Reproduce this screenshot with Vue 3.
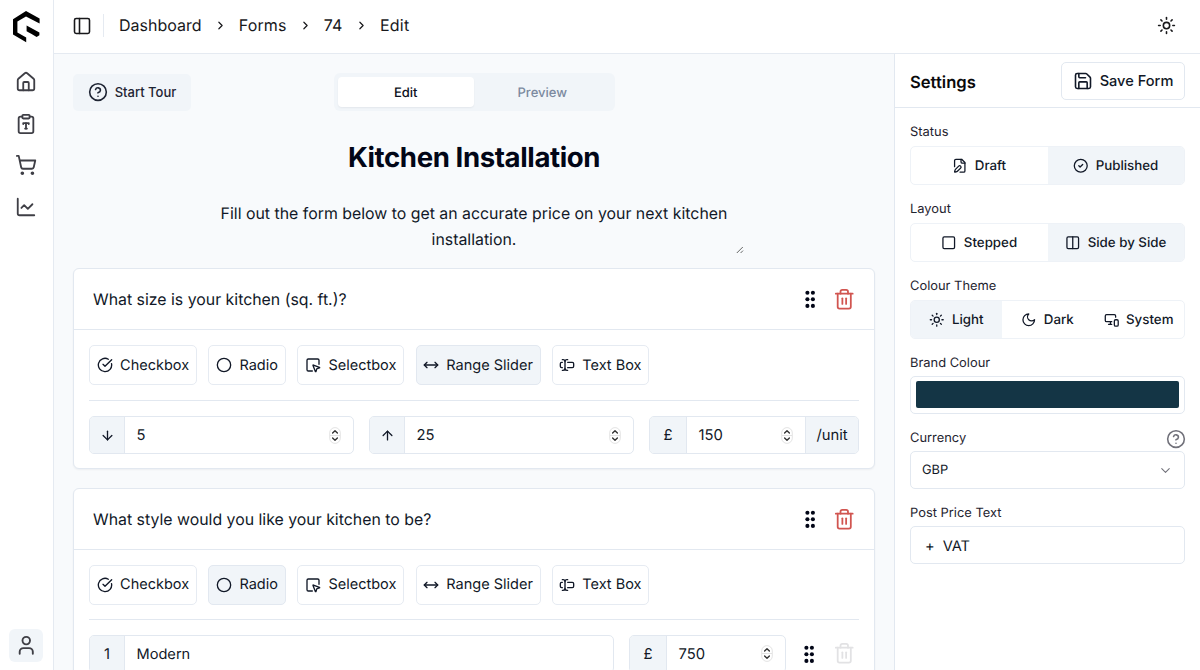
<script setup>
import { h } from 'vue'

const icons = {
  house: ['M15 21v-8a1 1 0 0 0-1-1h-4a1 1 0 0 0-1 1v8', 'M3 10a2 2 0 0 1 .709-1.528l7-5.999a2 2 0 0 1 2.582 0l7 5.999A2 2 0 0 1 21 10v9a2 2 0 0 1-2 2H5a2 2 0 0 1-2-2z'],
  clipboard: ['M9 2h6a1 1 0 0 1 1 1v2a1 1 0 0 1-1 1H9a1 1 0 0 1-1-1V3a1 1 0 0 1 1-1z', 'M16 4h2a2 2 0 0 1 2 2v14a2 2 0 0 1-2 2H6a2 2 0 0 1-2-2V6a2 2 0 0 1 2-2h2', 'M9 12v-1h6v1', 'M11 17h2', 'M12 11v6'],
  cart: ['M7 21a1 1 0 1 0 2 0a1 1 0 1 0-2 0', 'M18 21a1 1 0 1 0 2 0a1 1 0 1 0-2 0', 'M2.05 2.05h2l2.66 12.42a2 2 0 0 0 2 1.58h9.78a2 2 0 0 0 1.95-1.57l1.65-7.43H5.12'],
  chart: ['M3 3v16a2 2 0 0 0 2 2h16', 'm19 9-5 5-4-4-3 3'],
  user: ['M19 21v-2a4 4 0 0 0-4-4H9a4 4 0 0 0-4 4v2', 'M8 7a4 4 0 1 0 8 0a4 4 0 1 0-8 0'],
  panel: ['M5 3h14a2 2 0 0 1 2 2v14a2 2 0 0 1-2 2H5a2 2 0 0 1-2-2V5a2 2 0 0 1 2-2z', 'M9 3v18'],
  chevronRight: ['m9 18 6-6-6-6'],
  chevronDown: ['m6 9 6 6 6-6'],
  sun: ['M8 12a4 4 0 1 0 8 0a4 4 0 1 0-8 0', 'M12 2v2', 'M12 20v2', 'm4.93 4.93 1.41 1.41', 'm17.66 17.66 1.41 1.41', 'M2 12h2', 'M20 12h2', 'm6.34 17.66-1.41 1.41', 'm19.07 4.93-1.41 1.41'],
  help: ['M2 12a10 10 0 1 0 20 0a10 10 0 1 0-20 0', 'M9.09 9a3 3 0 0 1 5.83 1c0 2-3 3-3 3', 'M12 17h.01'],
  checkbox: ['M21.801 10A10 10 0 1 1 17 3.335', 'm9 11 3 3L22 4'],
  radio: ['M2 12a10 10 0 1 0 20 0a10 10 0 1 0-20 0'],
  select: ['M12.034 12.681a.498.498 0 0 1 .647-.647l9 3.5a.5.5 0 0 1-.033.943l-3.444 1.068a1 1 0 0 0-.66.66l-1.067 3.443a.5.5 0 0 1-.943.033z', 'M21 11V5a2 2 0 0 0-2-2H5a2 2 0 0 0-2 2v14a2 2 0 0 0 2 2h6'],
  range: ['m18 8 4 4-4 4', 'M2 12h20', 'm6 8-4 4 4 4'],
  textbox: ['M5 4h1a3 3 0 0 1 3 3 3 3 0 0 1 3-3h1', 'M13 20h-1a3 3 0 0 1-3-3 3 3 0 0 1-3 3H5', 'M5 16H4a2 2 0 0 1-2-2v-4a2 2 0 0 1 2-2h1', 'M13 8h7a2 2 0 0 1 2 2v4a2 2 0 0 1-2 2h-7', 'M9 7v10'],
  down: ['M12 5v14', 'm19 12-7 7-7-7'],
  up: ['m5 12 7-7 7 7', 'M12 19V5'],
  trash: ['M3 6h18', 'M19 6v14c0 1-1 2-2 2H7c-1 0-2-1-2-2V6', 'M8 6V4c0-1 1-2 2-2h4c1 0 2 1 2 2v2', 'M10 11v6', 'M14 11v6'],
  save: ['M15.2 3a2 2 0 0 1 1.4.6l3.8 3.8a2 2 0 0 1 .6 1.4V19a2 2 0 0 1-2 2H5a2 2 0 0 1-2-2V5a2 2 0 0 1 2-2z', 'M17 21v-7a1 1 0 0 0-1-1H8a1 1 0 0 0-1 1v7', 'M7 3v4a1 1 0 0 0 1 1h7'],
  draft: ['M12.5 22H18a2 2 0 0 0 2-2V7l-5-5H6a2 2 0 0 0-2 2v9.5', 'M14 2v4a2 2 0 0 0 2 2h4', 'M13.378 15.626a1 1 0 1 0-3.004-3.004l-5.01 5.012a2 2 0 0 0-.506.854l-.837 2.87a.5.5 0 0 0 .62.62l2.87-.837a2 2 0 0 0 .854-.506z'],
  published: ['M2 12a10 10 0 1 0 20 0a10 10 0 1 0-20 0', 'm9 12 2 2 4-4'],
  square: ['M5 3h14a2 2 0 0 1 2 2v14a2 2 0 0 1-2 2H5a2 2 0 0 1-2-2V5a2 2 0 0 1 2-2z'],
  columns: ['M5 3h14a2 2 0 0 1 2 2v14a2 2 0 0 1-2 2H5a2 2 0 0 1-2-2V5a2 2 0 0 1 2-2z', 'M12 3v18'],
  moon: ['M12 3a6 6 0 0 0 9 9 9 9 0 1 1-9-9Z'],
  system: ['M18 8V6a2 2 0 0 0-2-2H4a2 2 0 0 0-2 2v7a2 2 0 0 0 2 2h8', 'M10 19v-3.96 3.15', 'M7 19h5', 'M18 12h2a2 2 0 0 1 2 2v6a2 2 0 0 1-2 2h-2a2 2 0 0 1-2-2v-6a2 2 0 0 1 2-2z']
}

const Icon = (props) =>
  h('svg', {
    width: props.size, height: props.size, viewBox: '0 0 24 24', fill: 'none',
    stroke: 'currentColor', 'stroke-width': props.stroke ?? 2,
    'stroke-linecap': 'round', 'stroke-linejoin': 'round', style: { flex: 'none', display: 'block' }
  }, icons[props.name].map((d) => h('path', { d })))
Icon.props = ['name', 'size', 'stroke']

const Grip = () =>
  h('svg', { width: 12, height: 20, viewBox: '0 0 12 20', fill: '#020617', style: { flex: 'none', display: 'block' } },
    [3.7, 10.3, 16.9].flatMap((cy) => [3.4, 8.9].map((cx) => h('circle', { cx, cy, r: 2.05 }))))

const Spinner = () =>
  h('svg', { width: 12, height: 17, viewBox: '0 0 12 17', fill: 'none', style: { flex: 'none', display: 'block' } }, [
    h('rect', { x: 0.7, y: 0.6, width: 10.6, height: 15.8, rx: 5.3, stroke: '#dcdcdc', 'stroke-width': 0.8 }),
    h('path', { d: 'M1 8.5h10', stroke: '#dcdcdc', 'stroke-width': 0.8 }),
    h('path', { d: 'M3.6 6 6 3.7 8.4 6M3.6 11 6 13.3 8.4 11', stroke: '#333', 'stroke-width': 1.4, 'stroke-linecap': 'round', 'stroke-linejoin': 'round' })
  ])

const nav = ['house', 'clipboard', 'cart', 'chart']
const types = [
  { id: 'checkbox', label: 'Checkbox', w: 108 },
  { id: 'radio', label: 'Radio', w: 78 },
  { id: 'select', label: 'Selectbox', w: 107.4 },
  { id: 'range', label: 'Range Slider', w: 125 },
  { id: 'textbox', label: 'Text Box', w: 97.4 }
]
const questions = [
  { title: 'What size is your kitchen (sq. ft.)?', type: 'range' },
  { title: 'What style would you like your kitchen to be?', type: 'radio' }
]
</script>

<template>
  <div class="app">
    <aside class="sidebar">
      <svg class="logo" width="27" height="32" viewBox="0 0 27 32">
        <path d="M13 .1 26.6 7.4V12.4L13 5.4 4.4 10.6V21.6L13.2 26.4V31.2L0 23.6V8.2z" />
        <path d="M13.6 14.4 26.4 21.5V24.2L23.6 26.1 18.6 22.9 13.6 20.2z" />
      </svg>
      <nav>
        <span v-for="n in nav" :key="n" class="nav-item"><Icon :name="n" size="22" stroke="2" /></span>
      </nav>
      <span class="user"><Icon name="user" size="22.5" stroke="2" /></span>
    </aside>

    <div class="body">
      <header class="topbar">
        <Icon name="panel" size="20" stroke="1.9" />
        <i class="sep"></i>
        <div class="crumbs">
          <span class="c1">Dashboard</span><Icon name="chevronRight" size="13" stroke="2.2" />
          <span class="c2">Forms</span><Icon name="chevronRight" size="13" stroke="2.2" />
          <span class="c3">74</span><Icon name="chevronRight" size="13" stroke="2.2" />
          <span class="c4">Edit</span>
        </div>
        <Icon name="sun" size="19" stroke="2" />
      </header>

      <div class="content">
        <main class="canvas">
          <div class="toolbar">
            <button class="tour"><Icon name="help" size="20" stroke="1.9" /><span>Start Tour</span></button>
            <div class="tabs"><span class="tab on">Edit</span><span class="tab">Preview</span></div>
          </div>
          <h1>Kitchen Installation</h1>
          <div class="desc">
            <p>Fill out the form below to get an accurate price on your next kitchen<br>installation.</p>
            <svg class="resize" width="8" height="8" viewBox="0 0 8 8" fill="none" stroke="#555" stroke-width="0.9"><path d="M.8 7 6.8 1M4.6 7 7 4.6" /></svg>
          </div>

          <section v-for="q in questions" :key="q.title" class="card">
            <div class="card-head">
              <span class="q-title">{{ q.title }}</span>
              <Grip />
              <span class="trash"><Icon name="trash" size="22.5" stroke="1.9" /></span>
            </div>
            <div class="card-body">
              <div class="types">
                <span v-for="t in types" :key="t.id" class="type" :class="{ on: t.id === q.type }" :style="{ width: t.w + 'px' }">
                  <Icon :name="t.id" size="16" stroke="2" /><span>{{ t.label }}</span>
                </span>
              </div>
              <div v-if="q.type === 'range'" class="fields">
                <div class="field wide"><span class="pre"><Icon name="down" size="15" stroke="2.1" /></span><span class="val">5</span><Spinner /></div>
                <div class="field wide"><span class="pre"><Icon name="up" size="15" stroke="2.1" /></span><span class="val">25</span><Spinner /></div>
                <div class="field unit"><span class="pre pound">£</span><span class="val">150</span><Spinner /><span class="post">/unit</span></div>
              </div>
              <div v-else class="fields">
                <div class="field option"><span class="pre">1</span><span class="val">Modern</span></div>
                <div class="field price"><span class="pre pound">£</span><span class="val">750</span><Spinner /></div>
                <div class="row-tools"><Grip /><span class="trash off"><Icon name="trash" size="22.5" stroke="1.9" /></span></div>
              </div>
            </div>
          </section>
        </main>

        <aside class="settings">
          <div class="settings-head">
            <h2>Settings</h2>
            <button class="save"><Icon name="save" size="20" stroke="1.9" /><span>Save Form</span></button>
          </div>
          <div class="settings-body">
            <label>Status</label>
            <div class="seg">
              <span><Icon name="draft" size="15.5" /><b>Draft</b></span>
              <span class="on"><Icon name="published" size="15.5" /><b>Published</b></span>
            </div>
            <label>Layout</label>
            <div class="seg">
              <span><Icon name="square" size="15.5" /><b>Stepped</b></span>
              <span class="on"><Icon name="columns" size="15.5" /><b>Side by Side</b></span>
            </div>
            <label>Colour Theme</label>
            <div class="seg three">
              <span class="on"><Icon name="sun" size="15.5" /><b>Light</b></span>
              <span><Icon name="moon" size="15.5" /><b>Dark</b></span>
              <span><Icon name="system" size="15.5" /><b>System</b></span>
            </div>
            <label>Brand Colour</label>
            <div class="box colour"><i></i></div>
            <label class="with-help">Currency<Icon name="help" size="20" stroke="1.9" /></label>
            <div class="box currency"><span>GBP</span><Icon name="chevronDown" size="15" stroke="1.7" /></div>
            <label>Post Price Text</label>
            <div class="box vat"><span class="plus">+</span><span>VAT</span></div>
          </div>
        </aside>
      </div>
    </div>
  </div>
</template>

<style>
html, body { margin: 0; overflow: hidden; }
</style>

<style scoped>
* { box-sizing: border-box; }
.app {
  display: flex; width: 1200px; height: 670px; overflow: hidden; background: #fff;
  font-family: Inter, "Liberation Sans", sans-serif; font-size: 15px; color: #111827;
  text-rendering: geometricPrecision;
}
button { font: inherit; color: inherit; margin: 0; padding: 0; }
h1, h2, p { margin: 0; }
.sidebar { width: 54px; flex: none; border-right: 1px solid #e5eaf1; display: flex; flex-direction: column; align-items: center; padding: 11px 0 8px; }
.logo { display: block; }
nav { display: flex; flex-direction: column; margin-top: 18.8px; padding-right: 1px; }
.nav-item { height: 41.4px; display: flex; align-items: center; color: #3f3f46; }
.user { margin-top: auto; margin-right: 1px; width: 34px; height: 33px; border-radius: 6px; background: #f1f5f9; display: flex; align-items: center; justify-content: center; color: #3f3f46; }
.body { flex: 1; min-width: 0; display: flex; flex-direction: column; }
.topbar { height: 54px; flex: none; border-bottom: 1px solid #e5eaf1; display: flex; align-items: center; padding: 0 24.5px 2px 18px; color: #18181b; }
.sep { width: 1px; height: 23px; background: #e5eaf1; margin: 0 15px 0 11px; }
.crumbs { flex: 1; display: flex; align-items: center; font-size: 16px; padding-bottom: 1px; }
.crumbs svg { margin: 1px 12.1px 0; }
.c2 { letter-spacing: 0.15px; }
.c3 + svg { margin-left: 12.4px; margin-right: 12.4px; }
.c4 { letter-spacing: 0.2px; }
.content { flex: 1; min-height: 0; display: flex; }
.canvas { width: 840px; flex: none; background: #f8fafc; padding: 19px 19px 0; overflow: hidden; }
.toolbar { display: flex; height: 38px; align-items: center; }
.tour { width: 118px; height: 37px; border: 0; border-radius: 5px; background: #f1f5f9; display: flex; align-items: center; justify-content: center; gap: 7px; font-size: 13px; font-weight: 500; color: #1e2433; }
.tabs { margin-left: 142.5px; width: 281px; height: 38px; background: #f1f5f9; border-radius: 6px; padding: 4px; display: flex; font-size: 13px; font-weight: 500; color: #7c8aa0; }
.tab { flex: 1; display: flex; align-items: center; justify-content: center; border-radius: 4px; padding-top: 1px; }
.tab.on { background: #fff; color: #0b1020; box-shadow: 0 1px 2px rgba(15, 23, 42, .06); }
h1 { margin-top: 28px; height: 36px; line-height: 36px; text-align: center; font-size: 27.6px; font-weight: 700; letter-spacing: -0.4px; color: #020617; }
.desc { position: relative; width: 542px; margin: 26px auto 13px; height: 54px; text-align: center; font-size: 15.87px; line-height: 26.3px; white-space: nowrap; }
.resize { position: absolute; right: 1px; bottom: 1.5px; }
.card { height: 201px; border: 1px solid #e2e8f0; border-radius: 6px; background: #fff; margin-bottom: 19px; box-shadow: 0 1px 2px rgba(15, 23, 42, .05); }
.card-head { height: 61px; border-bottom: 1px solid #e2e8f0; display: flex; align-items: center; padding: 0 19px; font-size: 15.86px; }
.q-title { flex: 1; white-space: nowrap; }
.trash { margin-left: 17px; color: #d15550; }
.trash.off { color: #e2e2e4; margin-left: 18px; }
.card-body { padding: 15px 15px 0; }
.card:last-child .card-body { padding-top: 14.6px; }
.types { display: flex; gap: 11.05px; height: 56px; border-bottom: 1px solid #e2e8f0; }
.card:last-child .types { height: 55px; }
.type { height: 40px; flex: none; border: 1px solid #e6ebf2; border-radius: 5px; display: flex; align-items: center; justify-content: center; gap: 7.2px; font-size: 14.5px; white-space: nowrap; padding-top: 0.6px; }
.type.on { background: #f1f5f9; border-color: #e2e8f0; }
.fields { display: flex; gap: 15px; margin-top: 15px; }
.field { height: 38px; flex: none; border: 1px solid #e2e8f0; border-radius: 5px; display: flex; align-items: center; overflow: hidden; background: #fff; font-size: 14.8px; }
.wide { width: 265px; padding-right: 12px; }
.unit { width: 210px; }
.option { width: 525px; }
.price { width: 157px; padding-right: 12px; }
.pre { width: 35px; height: 100%; flex: none; background: #f1f5f9; border-right: 1px solid #e2e8f0; display: flex; align-items: center; justify-content: center; }
.pound { width: 37px; }
.val { flex: 1; padding-left: 11.5px; }
.option .val { font-size: 14.6px; }
.post { margin-left: 12px; width: 53px; height: 100%; background: #f1f5f9; border-left: 1px solid #e2e8f0; display: flex; align-items: center; justify-content: center; }
.row-tools { display: flex; align-items: center; margin-left: 2px; }
.settings { flex: 1; border-left: 1px solid #e2e8f0; background: #fff; }
.settings-head { height: 54px; border-bottom: 1px solid #e2e8f0; display: flex; align-items: center; justify-content: space-between; padding: 0 15px; }
h2 { font-size: 16.6px; font-weight: 600; padding-top: 4px; color: #09090b; }
.save { width: 124px; height: 38px; border: 1px solid #e2e8f0; border-radius: 5px; background: #fff; display: flex; align-items: center; justify-content: center; gap: 7px; font-size: 14.6px; font-weight: 500; }
.settings-body { padding: 14px 15px 0; }
label { display: flex; align-items: center; height: 20px; font-size: 12.9px; padding-top: 1px; margin-bottom: 4px; color: #1f2430; }
.with-help { justify-content: space-between; }
.with-help svg { color: #71717a; margin-right: -1px; }
.seg { display: flex; height: 39px; border: 1px solid #eef2f7; border-radius: 5px; margin-bottom: 14px; overflow: hidden; font-size: 13.3px; }
.seg span { flex: 1; display: flex; align-items: center; justify-content: center; gap: 7px; white-space: nowrap; }
.seg b { font-weight: 500; }
.seg .on { background: #f1f5f9; }
.box { height: 38px; border: 1px solid #e2e8f0; border-radius: 5px; margin: -0.6px 0 13.6px; display: flex; align-items: center; }
.colour { padding: 3px 5px 4px; }
.colour i { flex: 1; height: 27px; border-radius: 2px; background: #143545; }
.currency { justify-content: space-between; padding: 1px 11px 0; font-size: 12.9px; }
.currency svg { color: #71717a; }
.vat { padding: 1px 0 0 14px; font-size: 14.6px; }
.plus { margin-right: 8px; }
</style>
